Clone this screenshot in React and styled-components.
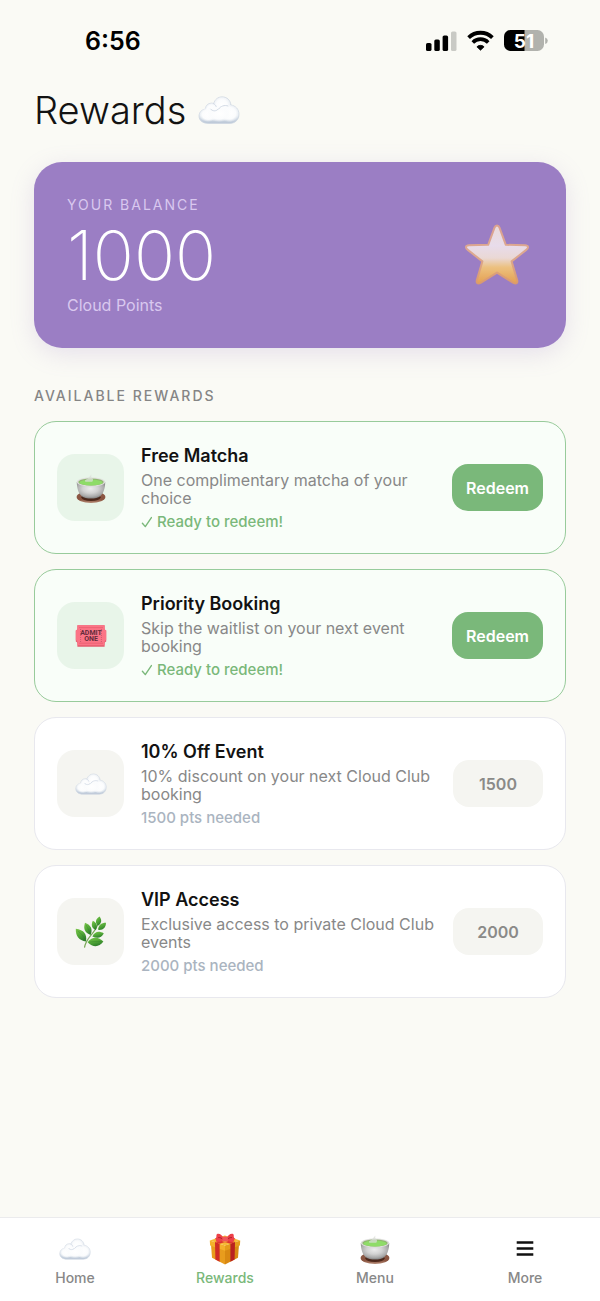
import { useId } from "react";
import styled, { createGlobalStyle } from "styled-components";

const rewards = [
  {
    id: "matcha",
    title: "Free Matcha",
    description: "One complimentary matcha of your choice",
    points: 500,
    icon: MatchaIcon,
  },
  {
    id: "priority",
    title: "Priority Booking",
    description: "Skip the waitlist on your next event booking",
    points: 1000,
    icon: TicketIcon,
  },
  {
    id: "discount",
    title: "10% Off Event",
    description: "10% discount on your next Cloud Club booking",
    points: 1500,
    icon: CloudIcon,
  },
  {
    id: "vip",
    title: "VIP Access",
    description: "Exclusive access to private Cloud Club events",
    points: 2000,
    icon: HerbIcon,
  },
];

const tabs = [
  { label: "Home", icon: CloudIcon },
  { label: "Rewards", icon: GiftIcon, active: true },
  { label: "Menu", icon: MatchaIcon },
  { label: "More", icon: MoreIcon },
];

export default function App() {
  const balance = 1000;

  return (
    <>
      <GlobalStyle />
      <Screen>
        <StatusBar>
          <Time>6:56</Time>
          <StatusIcons>
            <SignalIcon />
            <WifiIcon />
            <BatteryIcon />
          </StatusIcons>
        </StatusBar>

        <Content>
          <PageTitle>
            Rewards <CloudIcon size={42} />
          </PageTitle>

          <BalanceCard>
            <div>
              <BalanceLabel>YOUR BALANCE</BalanceLabel>
              <BalanceValue>{balance}</BalanceValue>
              <BalanceUnit>Cloud Points</BalanceUnit>
            </div>
            <StarIcon />
          </BalanceCard>

          <SectionTitle>AVAILABLE REWARDS</SectionTitle>
          <RewardList>
            {rewards.map((reward) => (
              <RewardItem key={reward.id} reward={reward} balance={balance} />
            ))}
          </RewardList>
        </Content>

        <TabBar>
          {tabs.map(({ label, icon: Icon, active }) => (
            <Tab key={label} href={`#${label.toLowerCase()}`} $active={active}>
              <Icon size={32} />
              {label}
            </Tab>
          ))}
        </TabBar>
      </Screen>
    </>
  );
}

function RewardItem({ reward, balance }) {
  const Icon = reward.icon;
  const ready = balance >= reward.points;

  return (
    <RewardCard $ready={ready}>
      <IconTile $ready={ready}>
        <Icon size={32} />
      </IconTile>
      <RewardText>
        <RewardTitle>{reward.title}</RewardTitle>
        <RewardDescription>{reward.description}</RewardDescription>
        <RewardStatus $ready={ready}>
          {ready && <CheckIcon />}
          {ready ? "Ready to redeem!" : `${reward.points} pts needed`}
        </RewardStatus>
      </RewardText>
      <RedeemButton type="button" disabled={!ready}>
        {ready ? "Redeem" : reward.points}
      </RedeemButton>
    </RewardCard>
  );
}

function CheckIcon() {
  return (
    <svg width="12" height="14" viewBox="0 0 12 14" fill="none" aria-hidden="true">
      <path
        d="M1.4 8.2 4.3 11.6 10.4 2.6"
        stroke="currentColor"
        strokeWidth="1.4"
        strokeLinecap="round"
        strokeLinejoin="round"
      />
    </svg>
  );
}

function SignalIcon() {
  return (
    <svg width="31" height="22" viewBox="0 0 31 22" aria-hidden="true">
      <rect x="0" y="13" width="5.5" height="8" rx="1.6" />
      <rect x="8.3" y="9.5" width="5.5" height="11.5" rx="1.6" />
      <rect x="16.6" y="5.5" width="5.5" height="15.5" rx="1.6" />
      <rect x="25" y="1.5" width="5.5" height="19.5" rx="1.6" fill="#c9cac5" />
    </svg>
  );
}

function WifiIcon() {
  return (
    <svg width="27" height="22" viewBox="0 0 27 22" fill="none" stroke="#000" aria-hidden="true">
      <path d="M1.6 7.6a17 17 0 0 1 23.8 0" strokeWidth="3.8" />
      <path d="M5.800 12.4a10.800 10.800 0 0 1 15.400 0" strokeWidth="3.6" />
      <path
        d="M13.5 20.2 9.900 16.800a5.200 5.200 0 0 1 7.200 0Z"
        fill="#000"
        strokeWidth="0.8"
        strokeLinejoin="round"
      />
    </svg>
  );
}

function BatteryIcon() {
  const id = useId();

  return (
    <svg width="44" height="22" viewBox="0 0 44 22" role="img" aria-label="Battery">
      <clipPath id={id}>
        <rect width="40" height="21" rx="6.5" />
      </clipPath>
      <g clipPath={`url(#${id})`}>
        <rect width="40" height="21" fill="#b1b2ad" />
        <rect width="20.5" height="21" fill="#000" />
      </g>
      <path d="M41.2 7.5a3.4 3.4 0 0 1 0 6.6Z" fill="#b1b2ad" />
      <text
        x="20"
        y="17.5"
        textAnchor="middle"
        fontSize="19"
        fontWeight="700"
        fontFamily="Inter, sans-serif"
        fill="#fff"
      >
        51
      </text>
    </svg>
  );
}

function CloudIcon({ size }) {
  const id = useId();
  const outline =
    "M8 26.2C3.600 26.200.8 24 .8 20.700c0-3 2.100-5.200 4.900-5.400.1-2.800 2-4.500 4.500-4.500.6 0 1.200.1 1.700.3C12.900 8 15.200 6 18.300 6c3.800 0 6.500 2.600 6.700 6.200 3.600.5 6.200 3.200 6.200 7 0 4.200-2.900 7-7 7Z";

  return (
    <svg width={size} height={size} viewBox="0 0 32 32" aria-hidden="true">
      <defs>
        <linearGradient id={`${id}b`} x1="0" y1="0" x2="0" y2="1">
          <stop offset="0" stopColor="#eef1f5" />
          <stop offset="0.7" stopColor="#e3e9f0" />
          <stop offset="1" stopColor="#b9c6d6" />
        </linearGradient>
        <radialGradient id={`${id}p`}>
          <stop offset="0" stopColor="#fff" />
          <stop offset="0.65" stopColor="#fbfcfd" />
          <stop offset="1" stopColor="#fbfcfd" stopOpacity="0" />
        </radialGradient>
      </defs>
      <path d={outline} fill={`url(#${id}b)`} stroke="#ccd5e0" strokeWidth="0.6" />
      <g fill={`url(#${id}p)`}>
        <circle cx="18.2" cy="12.4" r="6.6" />
        <circle cx="10.300" cy="15.500" r="5" />
        <ellipse cx="24" cy="18.500" rx="7.400" ry="6.800" />
        <ellipse cx="7.800" cy="19.500" rx="7" ry="5.600" />
        <ellipse cx="16" cy="18.800" rx="10" ry="6.400" />
      </g>
      <path
        d="M9.600 15.300c1.400 1.800 4.400 1.900 5.800 0M11.900 11.200c1 .4 1.600 1.200 1.900 2.100M15.800 15.200c1.300-2.200 4.400-3.200 7-2.300"
        fill="none"
        stroke="#cdd6e2"
        strokeWidth="0.7"
        strokeLinecap="round"
      />
    </svg>
  );
}

function MatchaIcon({ size }) {
  const id = useId();

  return (
    <svg width={size} height={size} viewBox="0 0 32 32" aria-hidden="true">
      <defs>
        <radialGradient id={`${id}c`} cx="0.48" cy="0.4" r="0.6">
          <stop offset="0" stopColor="#ececec" />
          <stop offset="0.45" stopColor="#d2d2d2" />
          <stop offset="0.8" stopColor="#aaa" />
          <stop offset="1" stopColor="#808080" />
        </radialGradient>
        <linearGradient id={`${id}s`} x1="0" y1="0" x2="0" y2="1">
          <stop offset="0" stopColor="#8a5945" />
          <stop offset="0.7" stopColor="#8a5440" />
          <stop offset="1" stopColor="#b58a76" />
        </linearGradient>
      </defs>
      <ellipse cx="16" cy="25" rx="14.400" ry="6" fill={`url(#${id}s)`} />
      <ellipse cx="16" cy="25.200" rx="9.600" ry="3.800" fill="#4d291c" />
      <path
        d="M1.800 10c0 6.400 1.800 11.600 5 14.200 3.700 3.200 14.700 3.200 18.400 0 3.200-2.600 5-7.800 5-14.200Z"
        fill={`url(#${id}c)`}
      />
      <ellipse cx="16" cy="10" rx="14.200" ry="4.600" fill="#dededb" />
      <ellipse cx="16" cy="10" rx="12.600" ry="3.600" fill="#8fb570" />
      <ellipse cx="16" cy="10.500" rx="11.600" ry="3" fill="#8fdc68" />
      <path
        d="M10.500 9.800c-1.600-1.400 1-2.500 2.400-3 .8-1.800 2.800-2.700 3.200-4.200.6 1.400-.5 2.600.9 3.400 1.700.9 1 2.800.2 3.800Z"
        fill="#d9ded7"
        opacity="0.75"
      />
    </svg>
  );
}

function TicketIcon({ size }) {
  return (
    <svg width={size} height={size} viewBox="0 0 32 32" aria-hidden="true">
      <path
        d="M2.400 5.300h27.200v3.200a2.200 2.200 0 0 0 1.600 2.100v10.800a2.200 2.200 0 0 0-1.600 2.100v3.200H2.400v-3.200a2.200 2.200 0 0 0-1.600-2.100V10.600a2.200 2.200 0 0 0 1.600-2.100Z"
        fill="#e45b6d"
      />
      <path
        d="M2.400 5.300h27.200v3.200a2.200 2.200 0 0 0 1.600 2.100v9.400a2.200 2.200 0 0 0-1.600 2.100v3.200H2.400v-3.200A2.200 2.200 0 0 0 .8 20v-9.400a2.200 2.200 0 0 0 1.600-2.100Z"
        fill="#fb7486"
      />
      <path d="M4 7.600h24M4 23.200h24" fill="none" stroke="#e65a6d" strokeWidth="0.7" />
      <path d="M5.600 9v13M26.400 9v13" stroke="#c25468" strokeWidth="0.8" strokeDasharray="1 1" />
      <g
        fill="#652c3b"
        fontFamily="Roboto, sans-serif"
        fontSize="7"
        fontWeight="700"
        textAnchor="middle"
      >
        <text x="16" y="15">ADMIT</text>
        <text x="16" y="21.400">ONE</text>
      </g>
    </svg>
  );
}

function HerbIcon({ size }) {
  const id = useId();

  return (
    <svg width={size} height={size} viewBox="0 0 32 32" aria-hidden="true">
      <defs>
        <linearGradient id={id} x1="0" y1="0" x2="0.5" y2="1">
          <stop offset="0" stopColor="#7cc74c" />
          <stop offset="0.55" stopColor="#52a837" />
          <stop offset="1" stopColor="#2f7f2c" />
        </linearGradient>
      </defs>
      <path
        d="M9.600 31.200c.6-4.600 3-7.800 6-11.600 3-3.400 6-7.400 7.400-12"
        fill="none"
        stroke="#79a957"
        strokeWidth="1.2"
        strokeLinecap="round"
      />
      <g fill={`url(#${id})`}>
        <path d="M24.600.4c2.700 3.800 2 7-1.800 9.400-3-3.600-2.200-7 1.800-9.400Z" />
        <path d="M31 6.800c-.2 5.200-3 7.600-8 7 .4-4.600 3.200-7 8-7Z" />
        <path d="M17.800 4.800c4 2 5.200 5 3 9.200-4-1.400-5-4.800-3-9.200Z" />
        <path d="M28.800 17.400c-2.400 4.400-6.400 5.400-11.400 3 2.400-4.800 6.400-5.800 11.400-3Z" />
        <path d="M10 6.800c6 2.400 8 6.400 5.600 12.200-5.800-2-7.600-6.200-5.600-12.200Z" />
        <path d="M.8 12.800c8 1.200 11.400 5.400 10.200 12.600C3.800 24.600.6 20.200.8 12.800Z" />
        <path d="M28.400 25.600c-4.400 5.800-10.200 6.200-15.800.6 4.400-5.600 10.600-6 15.800-.6Z" />
      </g>
      <path
        d="M2.600 14.800c3.600 2.600 6.200 5.800 8.200 10M11.200 9c1.600 3 3 6 4.200 9.400M14 26.200c4.200-.8 8.200-1 12.600-.6"
        fill="none"
        stroke="#2c7427"
        strokeWidth="0.5"
        opacity="0.6"
      />
    </svg>
  );
}

function GiftIcon({ size }) {
  return (
    <svg width={size} height={size} viewBox="0 0 32 32" aria-hidden="true">
      <path d="m2 11.500 14 4.700v15.300L3 24.800Z" fill="#e89c1d" />
      <path d="m30 11.500-14 4.700v15.300l13-6.700Z" fill="#d98912" />
      <path d="M.8 7.400 15.900 2.600l15.300 4.800L16 12.500Z" fill="#f6bb35" />
      <path d="M.8 7.400 16 12.500v5.300L1.100 12.600Z" fill="#f4b12b" />
      <path d="M31.200 7.400 16 12.500v5.300l14.900-5.200Z" fill="#e59c1b" />
      <path d="m6 9.100 4.600 1.600v18L6.400 26.500Z" fill="#cf2c26" />
      <path d="m26 9.100-4.600 1.600v18l4.200-2.200Z" fill="#b9221f" />
      <path d="m6 9.100 16-5 4.500 1.600-15.900 5ZM26 9.100l-16-5-4.400 1.600 15.800 5Z" fill="#dd352f" />
      <path
        d="M15.400 6.400C13.500 2.200 10.600.2 8.100 1c-1.300 1-.2 2.200-.9 3.600-.7 1.500-.6 3.600.8 4 2.600.6 5.200-.4 7.400-2.200Z"
        fill="#ed4149"
      />
      <path
        d="M16.800 6.400C18.700 2.200 21.600.2 24.100 1c1.300 1 .2 2.200.9 3.600.7 1.500.6 3.600-.8 4-2.600.6-5.200-.4-7.400-2.200Z"
        fill="#ed4149"
      />
      <path d="M14 6.400c-1.400-1.300-3-2-4.700-1.800M18.200 6.400c1.400-1.300 3-2 4.700-1.800" stroke="#a81c28" fill="none" />
      <rect x="13.3" y="3.6" width="5.6" height="5" rx="2" fill="#f0555a" />
    </svg>
  );
}

function MoreIcon({ size }) {
  return (
    <svg width={size} height={size} viewBox="0 0 32 32" aria-hidden="true">
      <path d="M7.700 9.500h16.600M7.700 15.500h16.600M7.700 21.500h16.600" stroke="#111" strokeWidth="2.4" />
    </svg>
  );
}

function StarIcon() {
  const id = useId();

  return (
    <svg width="66" height="66" viewBox="0 0 66 66" opacity="0.85" aria-hidden="true">
      <defs>
        <linearGradient id={`${id}f`} x1="0" y1="0" x2="0" y2="1">
          <stop offset="0" stopColor="#f8ecdd" />
          <stop offset="0.35" stopColor="#f6edf2" />
          <stop offset="0.56" stopColor="#f8e8d8" />
          <stop offset="0.72" stopColor="#fbcd74" />
          <stop offset="1" stopColor="#f2a63e" />
        </linearGradient>
        <linearGradient id={`${id}s`} x1="0" y1="0" x2="0" y2="1">
          <stop offset="0" stopColor="#e6a888" />
          <stop offset="0.5" stopColor="#e9b088" />
          <stop offset="1" stopColor="#e6a060" />
        </linearGradient>
      </defs>
      <path
        d="M33 3.500c1.200 0 2 .8 2.500 2.200L41.800 22.800l19.200.5c3.500.2 4 2.400 1.200 4.600L47.600 39.400l5.600 19c.7 2.900-1.200 3.900-3.700 2.500L33 50.600 16.500 60.900c-2.500 1.400-4.400.4-3.700-2.500l5.600-19L3.800 27.900C1 25.700 1.500 23.500 5 23.300l19.200-.5L30.500 5.700c.5-1.400 1.300-2.200 2.500-2.200Z"
        fill={`url(#${id}f)`}
        stroke={`url(#${id}s)`}
        strokeWidth="2"
        strokeLinejoin="round"
      />
    </svg>
  );
}

const GlobalStyle = createGlobalStyle`
  * {
    box-sizing: border-box;
    margin: 0;
    padding: 0;
  }

  body {
    background: #fafaf5;
    color: #121212;
    font-family: Inter, "Liberation Sans", sans-serif;
  }

  svg {
    flex-shrink: 0;
  }
`;

const Screen = styled.div`
  display: flex;
  flex-direction: column;
  min-height: 100vh;
`;

const StatusBar = styled.header`
  display: flex;
  align-items: center;
  justify-content: space-between;
  padding: 24px 52px 0 85px;
  color: #000;
`;

const Time = styled.span`
  font-size: 25px;
  font-weight: 600;
  line-height: 34px;
`;

const StatusIcons = styled.div`
  display: flex;
  align-items: center;
  gap: 10px;
`;

const Content = styled.main`
  flex: 1;
  padding: 28px 34px;
`;

const PageTitle = styled.h1`
  display: flex;
  align-items: center;
  gap: 12px;
  font-size: 38px;
  font-weight: 300;
  line-height: 48px;
`;

const BalanceCard = styled.section`
  display: flex;
  align-items: center;
  justify-content: space-between;
  margin-top: 28px;
  padding: 33px 36px 33px 33px;
  border-radius: 28px;
  background: #9b7ec4;
  color: #fff;
  box-shadow: 0 6px 24px rgba(155, 126, 196, 0.2);
`;

const BalanceLabel = styled.p`
  color: #d9c8ef;
  font-size: 14px;
  letter-spacing: 2px;
  line-height: 20px;
`;

const BalanceValue = styled.p`
  font-size: 68px;
  font-weight: 200;
  line-height: 80px;
`;

const BalanceUnit = styled.p`
  color: #d9c8ef;
  font-size: 16px;
  line-height: 20px;
`;

const SectionTitle = styled.h2`
  margin-top: 38px;
  color: #858585;
  font-size: 14px;
  font-weight: 500;
  letter-spacing: 2px;
  line-height: 20px;
`;

const RewardList = styled.ul`
  display: flex;
  flex-direction: column;
  gap: 15px;
  margin-top: 15px;
  list-style: none;
`;

const RewardCard = styled.li`
  display: flex;
  align-items: center;
  gap: 17px;
  padding: 22px;
  border: 1px solid ${({ $ready }) => ($ready ? "#98cb9b" : "#e8e8ee")};
  border-radius: 22px;
  background: ${({ $ready }) => ($ready ? "#f9fef9" : "#fff")};
`;

const IconTile = styled.div`
  display: grid;
  flex-shrink: 0;
  place-items: center;
  width: 67px;
  height: 67px;
  border-radius: 18px;
  background: ${({ $ready }) => ($ready ? "#e8f5e9" : "#f5f5f1")};
`;

const RewardText = styled.div`
  flex: 1;
  min-width: 0;
`;

const RewardTitle = styled.h3`
  font-size: 18px;
  font-weight: 600;
  line-height: 23px;
`;

const RewardDescription = styled.p`
  margin-top: 4px;
  color: #888;
  font-size: 16px;
  line-height: 18px;
`;

const RewardStatus = styled.p`
  display: flex;
  align-items: center;
  gap: 4px;
  margin-top: 6px;
  color: ${({ $ready }) => ($ready ? "#7ab87a" : "#aab4c0")};
  font-size: 15px;
  font-weight: 500;
  line-height: 18px;
`;

const RedeemButton = styled.button`
  min-width: 90px;
  height: 47px;
  padding: 0 14px;
  border: none;
  border-radius: 16px;
  background: #7ab87a;
  color: #fff;
  font: inherit;
  font-size: 16px;
  font-weight: 600;
  cursor: pointer;

  &:disabled {
    background: #f5f5f1;
    color: #8a8a88;
    cursor: default;
  }
`;

const TabBar = styled.nav`
  display: grid;
  grid-template-columns: repeat(4, 1fr);
  height: 84px;
  border-top: 1px solid #ebebed;
  background: #fff;
`;

const Tab = styled.a`
  display: flex;
  flex-direction: column;
  align-items: center;
  gap: 4px;
  padding-top: 15px;
  color: ${({ $active }) => ($active ? "#7ab87a" : "#888")};
  font-size: 14px;
  font-weight: 500;
  line-height: 18px;
  text-decoration: none;
`;
